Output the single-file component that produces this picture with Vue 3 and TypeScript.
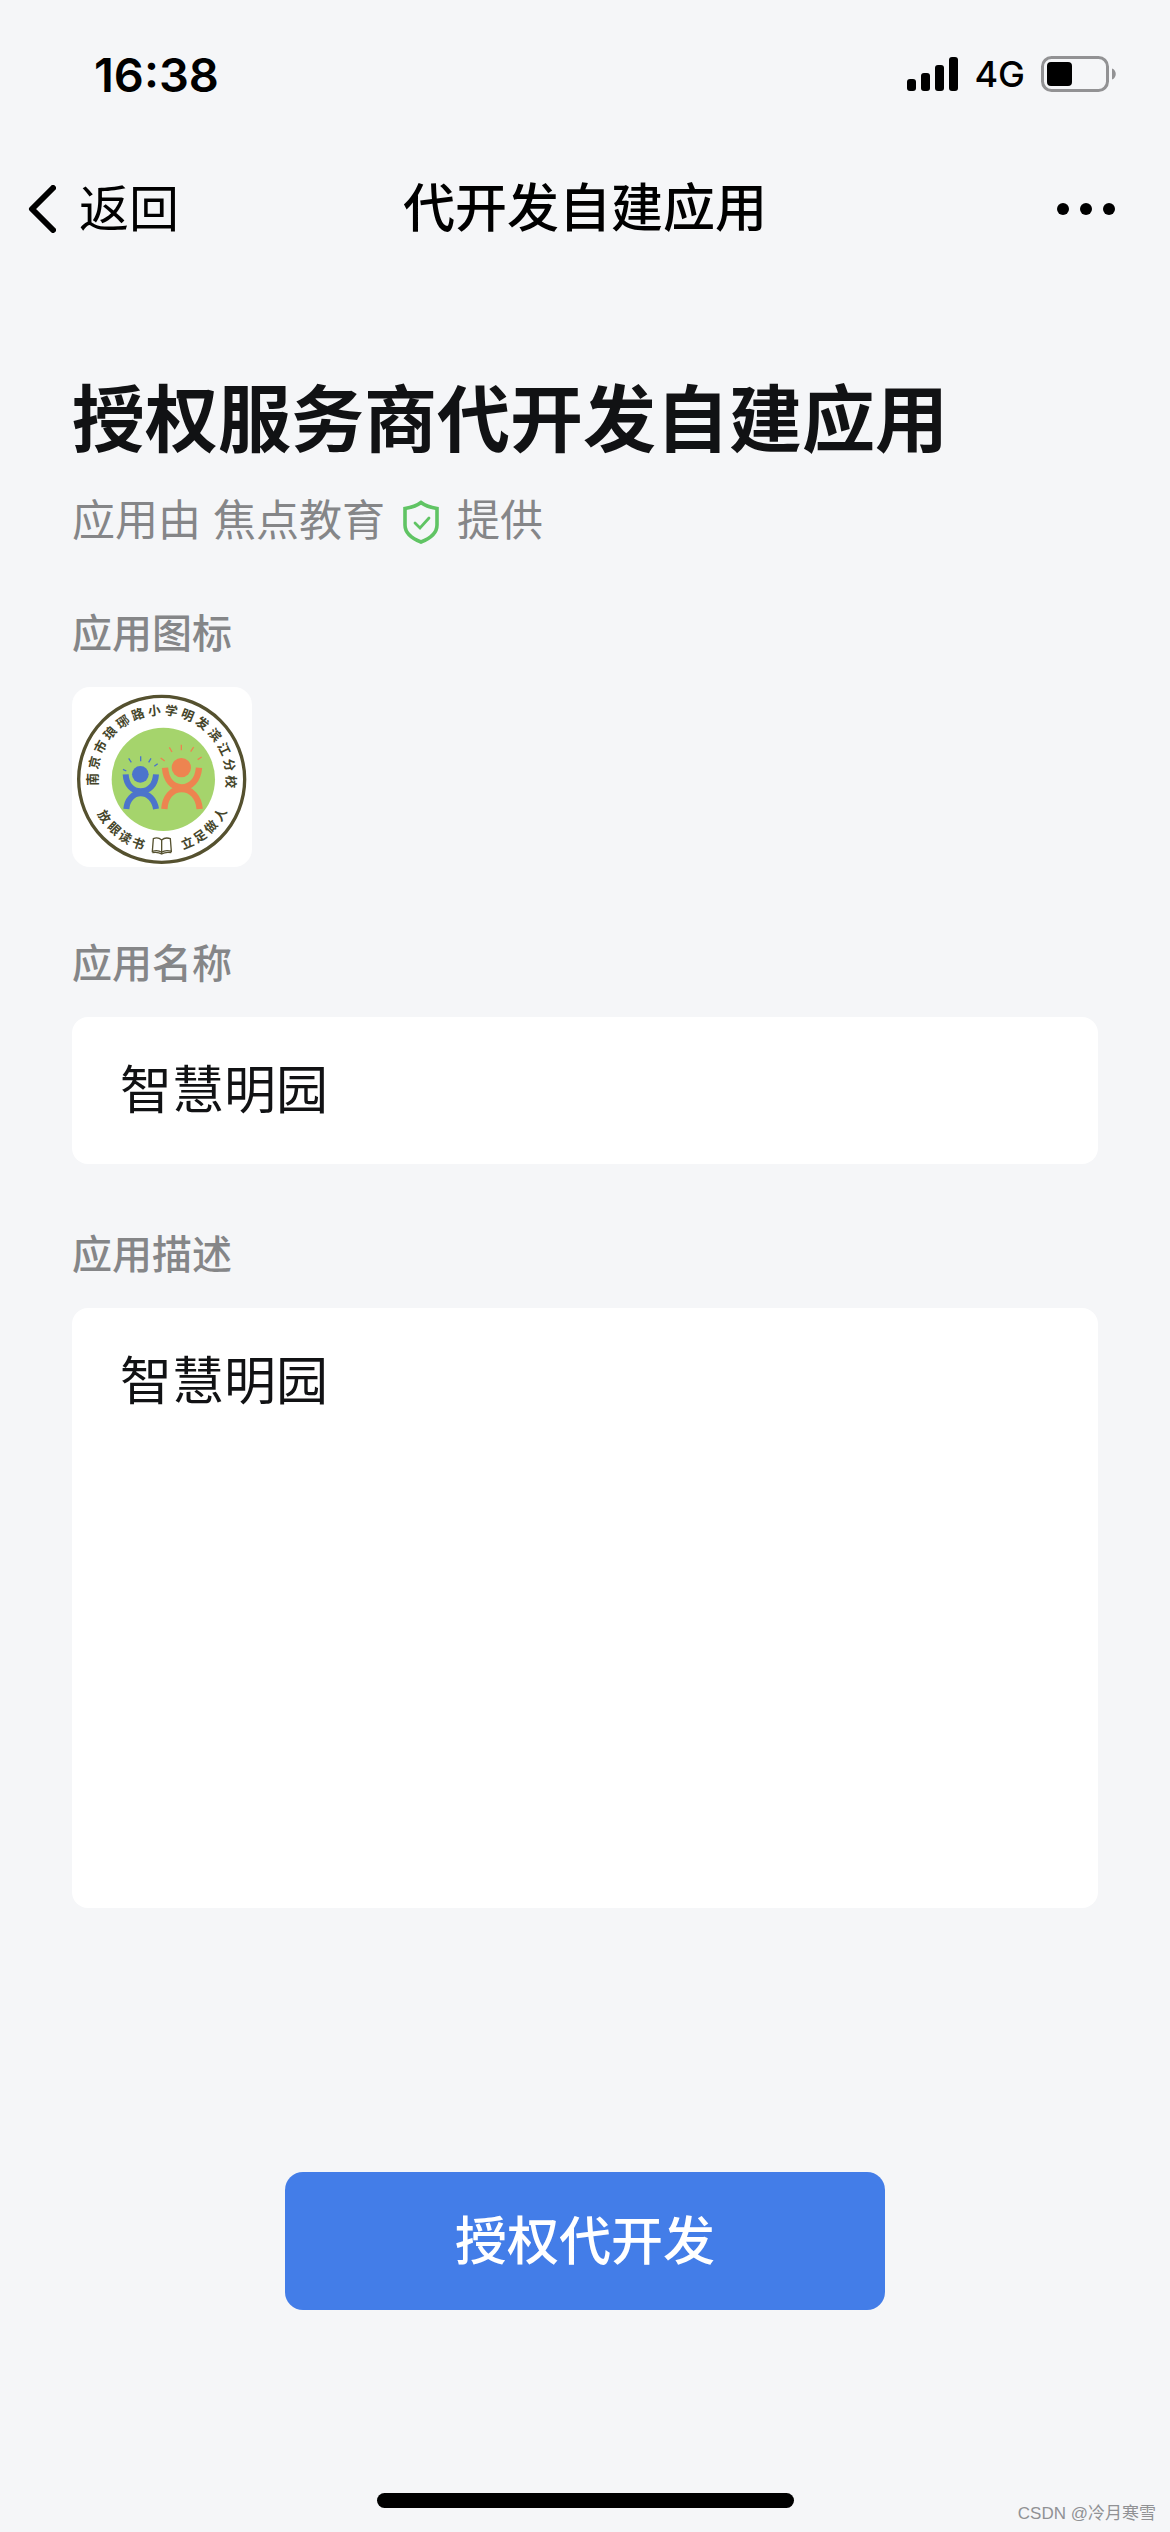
<script setup lang="ts">
import { ref } from 'vue'

interface SealChar {
  char: string
  angle: number
}

const appName = ref('智慧明园')
const appDescription = ref('智慧明园')

const schoolChars: SealChar[] = Array.from('南京市琅琊路小学明发滨江分校').map((char, i) => ({
  char,
  angle: -90 + i * 14,
}))

const mottoChars: SealChar[] = [
  { char: '放', angle: 57 },
  { char: '眼', angle: 44 },
  { char: '读', angle: 32 },
  { char: '书', angle: 20 },
  { char: '立', angle: -22 },
  { char: '足', angle: -34 },
  { char: '做', angle: -46 },
  { char: '人', angle: -59 },
]
</script>

<template>
  <div class="screen">
    <header>
      <div class="status-bar">
        <span class="time">16:38</span>
        <div class="status-icons">
          <svg class="signal" viewBox="0 0 51 34" aria-hidden="true">
            <rect x="0" y="22" width="9" height="12" rx="3" />
            <rect x="14" y="16" width="9" height="18" rx="3" />
            <rect x="28" y="8" width="9" height="26" rx="3" />
            <rect x="42" y="0" width="9" height="34" rx="3" />
          </svg>
          <span class="network">4G</span>
          <svg class="battery" viewBox="0 0 75 36" aria-hidden="true">
            <rect x="1.5" y="1.5" width="65" height="33" rx="9" fill="none" stroke="#929294" stroke-width="3" />
            <rect x="6" y="6" width="25" height="24" rx="4" />
            <path d="M71 12.500c5 1.500 5 9.500 0 11z" fill="#929294" />
          </svg>
        </div>
      </div>
      <nav class="nav-bar">
        <button class="back" type="button">
          <svg class="chevron" viewBox="0 0 28 48" aria-hidden="true">
            <path d="M25 3 4 24l21 21" />
          </svg>
          <span>返回</span>
        </button>
        <span class="nav-title">代开发自建应用</span>
        <button class="more" type="button" aria-label="更多">
          <svg viewBox="0 0 58 12" aria-hidden="true">
            <circle cx="6" cy="6" r="6" />
            <circle cx="29" cy="6" r="6" />
            <circle cx="52" cy="6" r="6" />
          </svg>
        </button>
      </nav>
    </header>

    <main>
      <h1>授权服务商代开发自建应用</h1>
      <p class="provider">
        <span>应用由 焦点教育</span>
        <svg class="shield" viewBox="0 -4 36 48" aria-hidden="true">
          <path d="M18 2.500C14 5.500 8.500 7.500 2 8.500V25c0 9 7 13.500 16 17 9-3.500 16-8 16-17V8.500C27.500 7.500 22 5.500 18 2.500z" stroke-width="3.600" />
          <path d="M12 23l5 5 9-10" stroke-width="2.800" stroke-linecap="round" />
        </svg>
        <span>提供</span>
      </p>

      <section class="icon-section">
        <h2>应用图标</h2>
        <svg class="app-icon" viewBox="0 0 540 540" role="img" aria-label="应用图标">
          <circle cx="269" cy="277" r="249" fill="#fff" stroke="#55512f" stroke-width="10" />
          <circle cx="274" cy="277" r="155" fill="#a5d46c" />
          <g class="seal-text">
            <text
              v-for="item in schoolChars"
              :key="item.char"
              x="269"
              y="83"
              :transform="`rotate(${item.angle} 269 277)`"
            >{{ item.char }}</text>
            <text
              v-for="item in mottoChars"
              :key="item.char"
              x="269"
              y="496"
              :transform="`rotate(${item.angle} 269 277)`"
            >{{ item.char }}</text>
          </g>
          <g fill="none" stroke="#4c74cc" stroke-width="18">
            <circle cx="205" cy="262" r="25" fill="#4c74cc" stroke="none" />
            <path d="M161 262c2 32 20 51 45 51s44-19 46-51" />
            <path d="M163 366c2-28 20-47 43-47s42 19 46 47" />
            <path d="M153 247l10 5M170 214l8 12M206 208v15M237 214l-7 12M257 230l-10 8" stroke-width="4" />
          </g>
          <g fill="none" stroke="#ed8450" stroke-width="19">
            <circle cx="328" cy="242" r="29" fill="#ed8450" stroke="none" />
            <path d="M279 242c3 37 22 59 50 59s49-22 52-59" />
            <path d="M277 366c2-36 23-60 52-60s51 24 54 60" />
            <path d="M266 213l12 9M292 181l8 14M328 173v17M365 180l-9 14M389 210l-12 8" stroke-width="4" />
          </g>
          <g fill="#fff" stroke="#55512f" stroke-width="4">
            <path d="M269 459c-8-7-18-7-25-4l-3 38c10-3 20-3 28 3 8-6 18-6 29-3l-3-38c-8-3-18-3-26 4zM269 459v42" />
            <path d="M241 497c11-2 20-1 28 4 8-5 18-6 29-4" fill="none" />
          </g>
        </svg>
      </section>

      <section class="field">
        <label for="app-name">应用名称</label>
        <input id="app-name" v-model="appName" type="text">
      </section>

      <section class="field">
        <label for="app-description">应用描述</label>
        <textarea id="app-description" v-model="appDescription"></textarea>
      </section>

      <button class="authorize" type="button">授权代开发</button>
    </main>

    <div class="home-indicator"></div>
    <span class="watermark">CSDN @冷月寒雪</span>
  </div>
</template>

<style>
body {
  background: #f5f6f8;
}
</style>

<style scoped>
.screen {
  position: relative;
  display: flex;
  flex-direction: column;
  box-sizing: border-box;
  min-height: 100vh;
  padding-bottom: 24px;
  background: #f5f6f8;
  color: #111214;
  font-family: Inter, "Noto Sans CJK SC", sans-serif;
}

button,
input,
textarea {
  box-sizing: border-box;
  margin: 0;
  border: 0;
  color: inherit;
  font-family: inherit;
}

button {
  padding: 0;
  background: none;
  cursor: pointer;
}

svg {
  display: block;
  flex: none;
}

header {
  color: #000;
}

.status-bar {
  display: flex;
  align-items: center;
  justify-content: space-between;
  height: 148px;
  padding: 0 54px 0 94px;
}

.time {
  font-size: 47px;
  font-weight: 600;
}

.status-icons {
  display: flex;
  align-items: center;
  gap: 16px;
}

.signal {
  width: 51px;
  height: 34px;
}

.network {
  font-size: 36px;
  font-weight: 500;
  line-height: 40px;
}

.battery {
  width: 75px;
  height: 36px;
}

.nav-bar {
  display: grid;
  grid-template-columns: 1fr auto 1fr;
  align-items: center;
  height: 122px;
  padding: 0 28px;
  font-size: 52px;
  line-height: 72px;
}

.back {
  display: flex;
  align-items: center;
  gap: 23px;
  justify-self: start;
  font-size: 50px;
  line-height: 72px;
}

.chevron {
  width: 28px;
  height: 48px;
  fill: none;
  stroke: #000;
  stroke-width: 6;
  stroke-linecap: round;
  stroke-linejoin: round;
}

.nav-title {
  font-weight: 500;
}

.more {
  justify-self: end;
  margin-right: 27px;
}

.more svg {
  width: 58px;
  height: 12px;
}

main {
  display: flex;
  flex-direction: column;
  padding: 100px 72px 0;
}

h1 {
  margin: 0;
  font-size: 73px;
  font-weight: 600;
  line-height: 100px;
}

.provider {
  display: flex;
  align-items: center;
  gap: 18px;
  margin: 18px 0 52px;
  color: #858688;
  font-size: 43px;
  line-height: 64px;
}

.shield {
  width: 36px;
  height: 48px;
  fill: none;
  stroke: #60c464;
}

h2,
label {
  display: block;
  margin: 0 0 23px;
  color: #858688;
  font-size: 40px;
  font-weight: 500;
  line-height: 60px;
}

.icon-section {
  margin-bottom: 67px;
}

.app-icon {
  width: 180px;
  height: 180px;
  border-radius: 18px;
  background: #fff;
}

.seal-text {
  fill: #45452a;
  font-family: "Noto Sans CJK SC", sans-serif;
  font-size: 38px;
  font-weight: 600;
  text-anchor: middle;
}

.field {
  margin-bottom: 61px;
}

input,
textarea {
  display: block;
  width: 100%;
  border-radius: 16px;
  outline: 0;
  background: #fff;
  font-size: 52px;
  line-height: 72px;
}

input {
  height: 147px;
  padding: 0 48px 8px;
}

textarea {
  height: 600px;
  padding: 38px 48px;
  resize: none;
}

.authorize {
  align-self: center;
  width: 600px;
  max-width: 100%;
  height: 138px;
  margin: 203px 0 64px;
  padding-bottom: 8px;
  border-radius: 18px;
  background: #437de8;
  color: #fff;
  font-size: 52px;
  font-weight: 500;
}

.home-indicator {
  align-self: center;
  width: 417px;
  height: 15px;
  margin-top: auto;
  border-radius: 8px;
  background: #000;
}

.watermark {
  position: absolute;
  right: 14px;
  bottom: 6px;
  color: #909194;
  font-family: "Liberation Sans", "Noto Sans CJK SC", sans-serif;
  font-size: 17px;
  line-height: 24px;
}
</style>
